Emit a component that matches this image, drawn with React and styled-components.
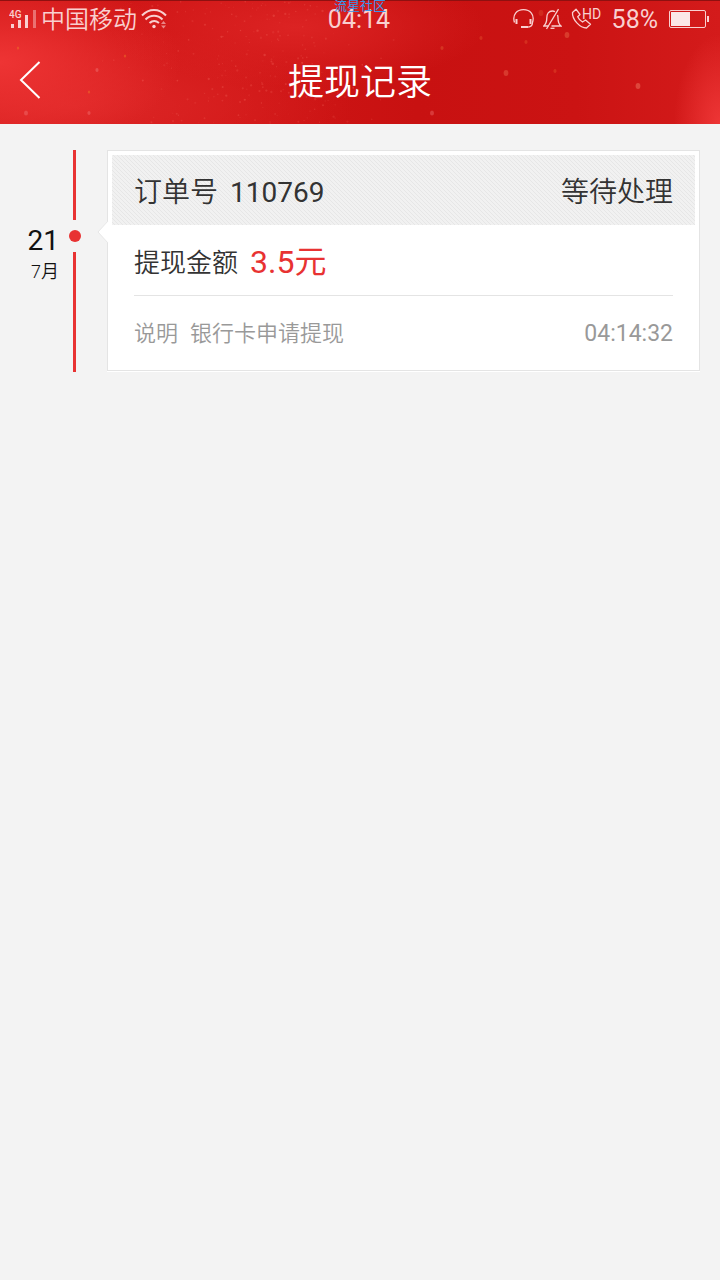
import React from 'react';
import styled, { createGlobalStyle } from 'styled-components';

const GlobalStyle = createGlobalStyle`
  * {
    box-sizing: border-box;
    margin: 0;
    padding: 0;
  }

  body {
    background: #f3f3f3;
    color: #333;
    font-family: Roboto, "Noto Sans CJK SC", sans-serif;
    font-weight: 350;
  }
`;

const TopArea = styled.header`
  position: relative;
  overflow: hidden;
  color: #fff;
  background:
    radial-gradient(ellipse 46px 90px at 100% 100%, #ee3636 0%, rgba(226, 40, 40, 0) 100%),
    radial-gradient(ellipse 180px 90px at 0% 50%, #ee3434 0%, rgba(230, 40, 40, 0) 100%),
    radial-gradient(ellipse 190px 60px at 41% 22%, #dc2323 0%, rgba(220, 34, 34, 0) 100%),
    radial-gradient(ellipse 280px 80px at 10% 85%, #de2727 0%, rgba(222, 38, 38, 0) 100%),
    linear-gradient(90deg, #d01717 0%, #d01616 30%, #c81111 58%, #cb1313 80%, #d41b1b 100%);
`;

const Sparkles = styled.svg`
  position: absolute;
  inset: 0;
  width: 100%;
  height: 100%;
`;

const StatusBar = styled.div`
  position: relative;
  display: grid;
  grid-template-columns: 1fr auto 1fr;
  align-items: center;
  height: 35px;
  padding: 0 11px 0 9px;
  border-top: 1px solid #8f1010;
  color: #f9d0d0;
  font-size: 25px;
  line-height: 32px;
`;

const StatusGroup = styled.div`
  display: flex;
  align-items: center;
  justify-content: ${({ $end }) => ($end ? 'flex-end' : 'flex-start')};
  gap: ${({ $end }) => ($end ? '9px' : '4px')};

  svg {
    display: block;
    flex: none;
  }
`;

const Carrier = styled.span`
  padding-top: 2px;
  font-size: 24px;
`;

const Digits = styled.span`
  font-weight: 400;
`;

const Clock = styled.time`
  padding-top: 3px;
  font-weight: 400;
`;

const Battery = styled(Digits)`
  padding: 3px 2px 0 1px;
`;

const Watermark = styled.span`
  position: absolute;
  top: -2px;
  left: 50%;
  transform: translateX(-50%);
  color: #3a94ea;
  font-size: 13px;
  font-weight: 400;
  line-height: 14px;
  white-space: nowrap;
`;

const NavBar = styled.div`
  position: relative;
  display: grid;
  grid-template-columns: 60px 1fr 60px;
  align-items: center;
  height: 89px;
`;

const BackButton = styled.button`
  display: flex;
  align-items: center;
  height: 88px;
  padding-left: 18px;
  border: 0;
  background: transparent;
  color: #fff;
`;

const Title = styled.h1`
  padding-top: 6px;
  font-size: 36px;
  font-weight: 350;
  line-height: 54px;
  text-align: center;
`;

const List = styled.main`
  padding: 26px 20px;
`;

const Record = styled.article`
  display: grid;
  grid-template-columns: 39px 12px 1fr;
`;

const DateBox = styled.div`
  padding-top: 74px;
  color: #111;
  text-align: right;
`;

const Day = styled.p`
  font-size: 28px;
  font-weight: 400;
  line-height: 34px;
`;

const Month = styled.p`
  font-size: 18px;
  line-height: 28px;
`;

const Rail = styled.div`
  display: flex;
  flex-direction: column;
  gap: 10px;
  margin-left: 10px;
  width: 12px;
`;

const Line = styled.span`
  width: 3px;
  height: 70px;
  margin-left: 4px;
  background: #e83232;
  flex-grow: ${({ $fill }) => ($fill ? 1 : 0)};
`;

const Dot = styled.span`
  width: 12px;
  height: 12px;
  border-radius: 50%;
  background: #e83232;
`;

const Card = styled.section`
  position: relative;
  margin: 0 0 1px 36px;
  padding: 4px;
  border: 1px solid #e4e4e4;
  background: #fff;
  box-shadow: 0 1px 0 #fff;
`;

const Pointer = styled.svg`
  position: absolute;
  top: 69px;
  left: -11px;
`;

const CardHead = styled.div`
  display: flex;
  justify-content: space-between;
  height: 70px;
  padding: 2px 22px 0;
  background-color: #f1f1f1;
  background-image: linear-gradient(45deg, #e6e6e6 12.5%, transparent 12.5% 50%, #e6e6e6 50% 62.5%, transparent 62.5%);
  background-size: 4px 4px;
  font-size: 28px;
  line-height: 72px;
`;

const CardBody = styled.div`
  padding: 0 22px;
`;

const Label = styled.span`
  margin-right: 12px;
`;

const AmountRow = styled.div`
  display: flex;
  height: 71px;
  padding-top: 2px;
  border-bottom: 1px solid #e4e4e4;
  font-size: 26px;
  line-height: 72px;
`;

const Amount = styled.strong`
  color: #e83232;
  font-size: 32px;
  font-weight: 400;
  line-height: 70px;
`;

const NoteRow = styled.div`
  display: flex;
  justify-content: space-between;
  height: 70px;
  padding-top: 2px;
  color: #999;
  font-size: 22px;
  line-height: 72px;
`;

const Time = styled.time`
  font-size: 23px;
  font-weight: 400;
`;

const records = [
  {
    id: '110769',
    day: '21',
    month: '7月',
    status: '等待处理',
    amount: '3.5元',
    note: '银行卡申请提现',
    time: '04:14:32',
  },
];

// fixed seed, so the specks stay in place between renders
const makeSpecks = (count) => {
  let seed = 41;
  const next = () => {
    seed = (seed * 16807) % 2147483647;
    return seed / 2147483647;
  };

  return Array.from({ length: count }, () => ({
    x: 80 + (next() + next() + next()) * 120,
    y: next() * 124,
    r: 0.5 + next() * 0.7,
    opacity: 0.1 + next() * 0.25,
  }));
};

const specks = makeSpecks(230);

const glows = [
  [26, 113, 2.5, '#f07070'],
  [89, 113, 2, '#f07070'],
  [97, 70, 2, '#f07878'],
  [18, 48, 1.5, '#f07a28'],
  [89, 92, 1.5, '#f07a28'],
  [125, 56, 1.5, '#f07a28'],
  [432, 113, 2.5, '#ec6a6a'],
  [442, 48, 2, '#e25a30'],
  [506, 73, 3, '#e86a50'],
  [526, 42, 2, '#e2502c'],
  [567, 35, 3, '#ea6c4c'],
  [555, 71, 2, '#e2502c'],
  [541, 13, 3, '#d94a2c'],
  [638, 86, 3, '#f08068'],
  [481, 38, 2, '#e2502c'],
];

const Backdrop = () => (
  <Sparkles viewBox="0 0 720 124" preserveAspectRatio="xMidYMid slice" aria-hidden="true">
    {specks.map(({ x, y, r, opacity }, i) => (
      <circle key={i} cx={x} cy={y} r={r} fill="#f56a60" opacity={opacity} />
    ))}
    {glows.map(([x, y, r, fill]) => (
      <ellipse key={`${x}-${y}`} cx={x} cy={y} rx={r * 0.8} ry={r} fill={fill} opacity="0.45" />
    ))}
  </Sparkles>
);

const SignalIcon = () => (
  <svg width="28" height="22" viewBox="0 0 28 22" fill="currentColor">
    <text x="0" y="10" fontSize="10" fontWeight="500">4G</text>
    <path d="M2 16h3v4H2zM9 12h3v8H9zM16 7h3v13h-3z" />
    <path d="M24 2h3v18h-3z" opacity="0.45" />
  </svg>
);

const WifiIcon = () => (
  <svg width="26" height="22" viewBox="0 0 26 22" fill="none" stroke="currentColor" strokeWidth="2">
    <path d="M1 7.500C8 0 18 0 25 7.500M4.500 11.500c5-5 12-5 17 0M8.500 15c3-2.600 6.500-2.600 9.500 0" />
    <circle cx="13" cy="18.500" r="1.700" fill="currentColor" stroke="none" />
    <path d="M20 16l2.500-3 2.500 3zM20 17.500l2.500 3 2.500-3z" fill="currentColor" stroke="none" opacity="0.6" />
  </svg>
);

const HeadsetIcon = () => (
  <svg width="21" height="22" viewBox="0 0 21 22" fill="none" stroke="currentColor" strokeWidth="1.300">
    <path d="M1.500 14.500C-1 6.500 4 1.700 10.500 1.700S22 6.500 19.500 14.500c0 3.500-2 4.700-5.500 4.700" />
    <path d="M3.500 11v5M17.500 11v5" strokeWidth="2" />
    <path d="M8 19h7" strokeWidth="2" />
  </svg>
);

const MuteIcon = () => (
  <svg width="19" height="22" viewBox="0 0 19 22" fill="none" stroke="currentColor" strokeWidth="1.300">
    <path d="M5.500 18H.8c2.200-2 3-4 3-8C3.800 5.500 5.800 3 9.300 3c1 0 2 .2 2.700.7M14.500 7c.4 1 .5 2 .5 3 0 4 .5 6 3 8H8.500" />
    <path d="M15.500 1.200L3.500 21" />
    <path d="M7.500 20.300h4" />
  </svg>
);

const CallHdIcon = () => (
  <svg width="31" height="24" viewBox="0 0 31 24" fill="none" stroke="currentColor" strokeWidth="1.300">
    <path d="M5 2.200L1.500 5.500c-.5 7 7.500 15.500 14 15.500l4-3.700-5-4.300-3 2c-2-1-3.800-3-4.800-5.200L9 7.500z" strokeLinejoin="round" />
    <text x="11" y="12" fontSize="14" fontWeight="400" fill="currentColor" stroke="none">HD</text>
  </svg>
);

const BatteryIcon = () => (
  <svg width="40" height="18" viewBox="0 0 40 18">
    <rect x="0.5" y="0.500" width="36" height="17" rx="1.500" fill="none" stroke="#f9d0d0" />
    <path d="M2 2h19v14H2z" fill="#fbe8e8" />
    <path d="M38 6h2v6h-2z" fill="#f9d0d0" />
  </svg>
);

const RecordItem = ({ id, day, month, status, amount, note, time }) => (
  <Record>
    <DateBox>
      <Day>{day}</Day>
      <Month>{month}</Month>
    </DateBox>
    <Rail>
      <Line />
      <Dot />
      <Line $fill />
    </Rail>
    <Card>
      <Pointer width="12" height="24" viewBox="0 0 12 24" aria-hidden="true">
        <path d="M12 0L1 12l11 12z" fill="#fff" />
        <path d="M11 1L1 12l10 11" fill="none" stroke="#e8e8e8" />
      </Pointer>
      <CardHead>
        <p><Label>订单号</Label><Digits>{id}</Digits></p>
        <p>{status}</p>
      </CardHead>
      <CardBody>
        <AmountRow>
          <Label>提现金额</Label>
          <Amount>{amount}</Amount>
        </AmountRow>
        <NoteRow>
          <p><Label>说明</Label>{note}</p>
          <Time>{time}</Time>
        </NoteRow>
      </CardBody>
    </Card>
  </Record>
);

const App = () => (
  <>
    <GlobalStyle />
    <TopArea>
      <Backdrop />
      <StatusBar>
        <StatusGroup>
          <SignalIcon />
          <Carrier>中国移动</Carrier>
          <WifiIcon />
        </StatusGroup>
        <Clock>04:14</Clock>
        <StatusGroup $end>
          <HeadsetIcon />
          <MuteIcon />
          <CallHdIcon />
          <Battery>58%</Battery>
          <BatteryIcon />
        </StatusGroup>
        <Watermark>流星社区</Watermark>
      </StatusBar>
      <NavBar>
        <BackButton aria-label="返回">
          <svg width="24" height="40" viewBox="0 0 24 40" fill="none" stroke="currentColor" strokeWidth="2">
            <path d="M21.500 2L3 20l18.500 18" />
          </svg>
        </BackButton>
        <Title>提现记录</Title>
      </NavBar>
    </TopArea>
    <List>
      {records.map((record) => (
        <RecordItem key={record.id} {...record} />
      ))}
    </List>
  </>
);

export default App;
